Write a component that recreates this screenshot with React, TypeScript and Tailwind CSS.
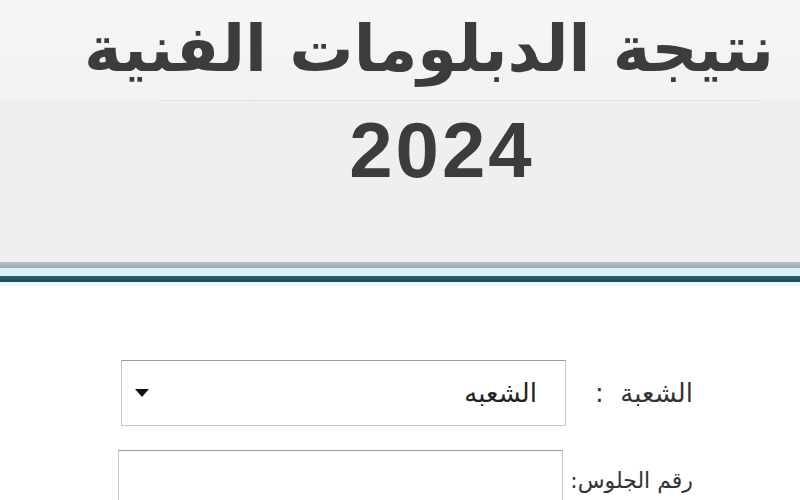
export default function App() {
  return (
    <div className="h-[500px] w-[800px] overflow-hidden bg-white" style={{ fontFamily: '"DejaVu Sans", "Noto Sans", sans-serif' }}>
      <header className="flex h-[262px] flex-col items-center bg-[#efefef]">
        <div className="flex h-[100px] w-full justify-end bg-gradient-to-b from-[#f6f6f6] to-[#f2f2f2] pr-[26px]">
          <h1 dir="rtl" className="mt-[4px] text-[64px] leading-[90px] font-bold text-[#3c3c3c]">
            نتيجة الدبلومات الفنية
          </h1>
        </div>
        <div className="ml-[120px] h-px w-[600px] bg-[#e4e4e4]" />
        <p className="mt-[4px] ml-[84px] font-['Liberation_Sans',sans-serif] text-[78px] leading-[90px] font-bold tracking-[3px] text-[#3c3c3c]">
          2024
        </p>
      </header>
      <div className="h-[6px] bg-gradient-to-b from-[#b9c1c8] to-[#9aa6b0]" />
      <div className="h-[8px] bg-[#d6f1f7]" />
      <div className="h-[6px] bg-gradient-to-b from-[#2c5a6e] to-[#1f4b5c]" />
      <div className="h-[4px] bg-[#e4f8fc]" />

      <form dir="rtl" className="flex flex-col gap-[24px] pt-[74px] pr-[107px]">
        <div className="flex items-center">
          <label className="w-[118px] whitespace-nowrap text-[26px] text-[#333]">الشعبة&nbsp;&nbsp;:</label>
          <div className="mr-[9px] flex h-[66px] w-[445px] items-center justify-between border border-[#c8c8c8] border-t-[#9a9a9a] bg-white pr-[28px] pl-[12px]">
            <span className="text-[26px] text-[#222]">الشعبه</span>
            <svg width="16" height="10" viewBox="0 0 16 10">
              <path d="M1 1h14L8 9z" fill="#111" />
            </svg>
          </div>
        </div>
        <div className="flex items-center">
          <label className="mb-[6px] w-[122px] whitespace-nowrap text-[22px] text-[#333]">رقم الجلوس:</label>
          <input
            type="text"
            className="mr-[8px] h-[66px] w-[445px] border border-[#c8c8c8] border-t-[#9a9a9a] bg-white outline-none"
          />
        </div>
      </form>
    </div>
  );
}
